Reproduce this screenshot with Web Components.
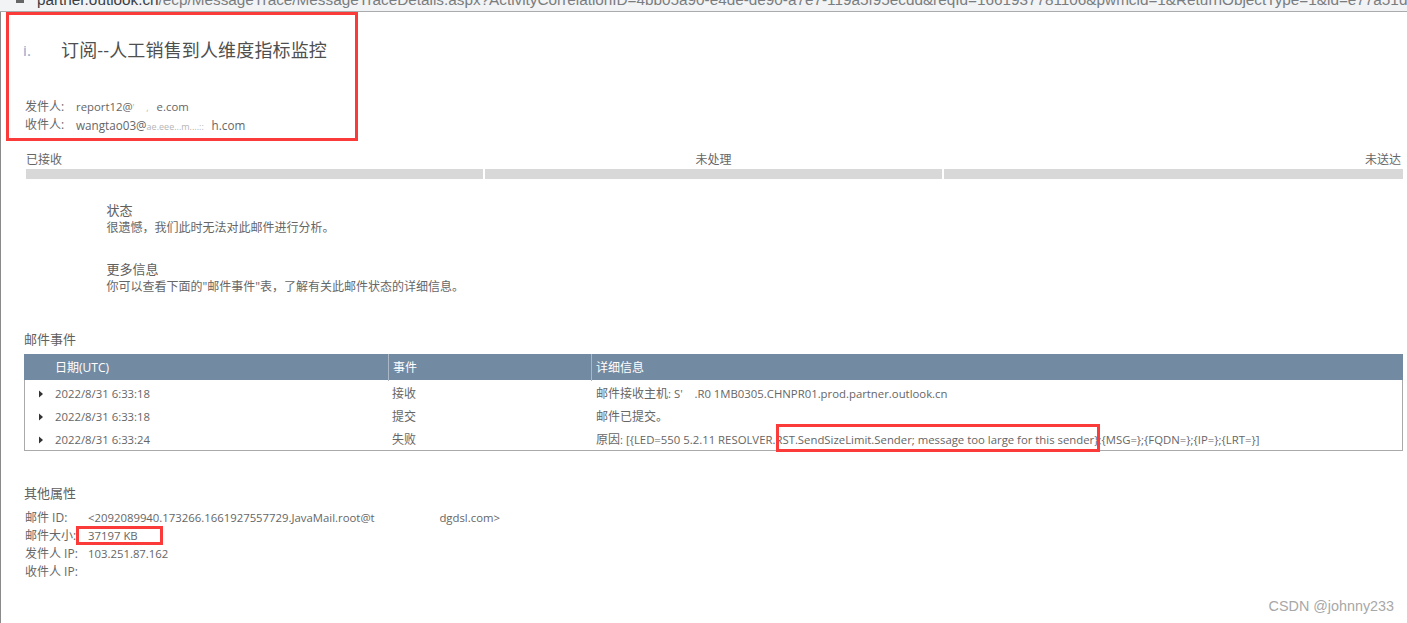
<!DOCTYPE html>
<html lang="zh">
<head>
<meta charset="utf-8">
<title>邮件跟踪详细信息</title>
<style>
html, body { margin: 0; padding: 0; background: #fff; }
body {
    width: 1407px;
    height: 623px;
    overflow: hidden;
    position: relative;
    font-family: "Open Sans", "Noto Sans CJK SC", sans-serif;
    font-size: 12px;
    color: #666;
}
.lat { font-size: 11.35px; }
.mail { font-size: 11.7px; }
.crumb { display: inline-block; font-size: 9px; color: #b5b5b5; white-space: nowrap; vertical-align: baseline; }
</style>
</head>
<body>
<url-bar domain="partner.outlook.cn">/ecp/MessageTrace/MessageTraceDetails.aspx?ActivityCorrelationID=4bb05a90-e4de-de90-a7e7-119a5f95ecdd&amp;reqId=1661937781106&amp;pwmcid=1&amp;ReturnObjectType=1&amp;id=e77a51de</url-bar>
<trace-page>
    <mail-head title-text="订阅--人工销售到人维度指标监控">
        <span slot="sender" class="lat">report12@<span class="crumb" style="width:24px">' &nbsp; &nbsp; ,</span>e.com</span>
        <span slot="recipient" class="mail">wangtao03@<span class="crumb" style="width:65px">ae.eee...m....::</span>h.com</span>
    </mail-head>
    <trace-progress></trace-progress>
    <trace-note heading="状态">很遗憾，我们此时无法对此邮件进行分析。</trace-note>
    <trace-note heading="更多信息">你可以查看下面的"邮件事件"表，了解有关此邮件状态的详细信息。</trace-note>
    <event-table>
        <event-row date="2022/8/31 6:33:18" kind="接收">邮件接收主机<span class="lat">: S'&nbsp;&nbsp;&nbsp;&nbsp;.R0 1MB0305.CHNPR01.prod.partner.outlook.cn</span></event-row>
        <event-row date="2022/8/31 6:33:18" kind="提交">邮件已提交。</event-row>
        <event-row date="2022/8/31 6:33:24" kind="失败">原因<span class="lat">: [{LED=550 5.2.11 RESOLVER.RST.SendSizeLimit.Sender; message too large for this sender};{MSG=};{FQDN=};{IP=};{LRT=}]</span></event-row>
    </event-table>
    <mail-props>
        <prop-line label="邮件 ID:"><span class="lat">&lt;2092089940.173266.1661927557729.JavaMail.root@t&nbsp;&nbsp;&nbsp;&nbsp;&nbsp;&nbsp;&nbsp;&nbsp;&nbsp;&nbsp;&nbsp;&nbsp;&nbsp;&nbsp;&nbsp;&nbsp;&nbsp;&nbsp;&nbsp;&nbsp;&nbsp;&nbsp;dgdsl.com&gt;</span></prop-line>
        <prop-line label="邮件大小:"><span class="lat">37197 KB</span></prop-line>
        <prop-line label="发件人 IP:"><span class="lat">103.251.87.162</span></prop-line>
        <prop-line label="收件人 IP:"></prop-line>
    </mail-props>
</trace-page>
<red-mark style="left:6px;top:12px;width:352px;height:129px"></red-mark>
<red-mark style="left:776px;top:424px;width:324px;height:28px"></red-mark>
<red-mark style="left:76px;top:526px;width:87px;height:19px"></red-mark>
<water-mark>CSDN @johnny233</water-mark>

<script>
class UrlBar extends HTMLElement {
    constructor() {
        super();
        this.attachShadow({mode: "open"}).innerHTML = `
        <style>
        :host {
            display: flex;
            height: 11px;
            background: #f1f3f4;
            border-bottom: 1px solid #a9abad;
            overflow: hidden;
            white-space: nowrap;
            font-family: "Liberation Sans", sans-serif;
            font-size: 15.3px;
            line-height: 14px;
            color: #7a7d80;
        }
        .lock { width: 8px; height: 3px; margin: 0 13px 0 16px; background: #666; flex: none; }
        .url { margin-top: -7px; }
        b { font-weight: 400; color: #3a3d44; }
        </style>
        <div class="lock"></div><div class="url"><b id="d"></b><slot></slot></div>`;
        this.shadowRoot.getElementById("d").textContent = this.getAttribute("domain");
    }
}

class TracePage extends HTMLElement {
    constructor() {
        super();
        this.attachShadow({mode: "open"}).innerHTML = `
        <style>
        :host {
            display: flex;
            flex-direction: column;
            height: 611px;
            box-sizing: border-box;
            border-left: 1px solid #8a8a8a;
            padding: 0 4px 0 23px;
        }
        </style>
        <slot></slot>`;
    }
}

class MailHead extends HTMLElement {
    constructor() {
        super();
        this.attachShadow({mode: "open"}).innerHTML = `
        <style>
        :host { display: block; height: 137px; margin-left: -1px; }
        h1 {
            margin: 0;
            padding-top: 25px;
            height: 61px;
            font-size: 18px;
            font-weight: 400;
            line-height: 26px;
            letter-spacing: .15px;
            color: #4f4f4f;
            display: flex;
        }
        .stub { color: #7fabd0; font-size: 15px; width: 38px; flex: none; }
        .line { display: flex; height: 18px; line-height: 18px; color: #666; padding-left: 2px; }
        .line b { font-weight: 400; width: 51px; flex: none; }
        ::slotted(span) { white-space: nowrap; }
        </style>
        <h1><span class="stub">i.</span><span id="title"></span></h1>
        <div class="line"><b>发件人:</b><slot name="sender"></slot></div>
        <div class="line"><b>收件人:</b><slot name="recipient"></slot></div>`;
        this.shadowRoot.getElementById("title").textContent = this.getAttribute("title-text");
    }
}

class TraceProgress extends HTMLElement {
    constructor() {
        super();
        this.attachShadow({mode: "open"}).innerHTML = `
        <style>
        :host {
            display: grid;
            grid-template-columns: 457px 457px 459px;
            grid-template-rows: 20px 10px;
            column-gap: 2px;
            margin: 0 0 0 2px;
            height: 32px;
        }
        span { line-height: 22px; grid-row: 1; }
        .mid { text-align: center; }
        .end { text-align: right; padding-right: 2px; }
        i { display: block; background: #d8d8d8; grid-row: 2; }
        </style>
        <span>已接收</span><span class="mid">未处理</span><span class="end">未送达</span>
        <i></i><i></i><i></i>`;
    }
}

class TraceNote extends HTMLElement {
    constructor() {
        super();
        this.attachShadow({mode: "open"}).innerHTML = `
        <style>
        :host { display: block; padding: 20px 0 0 82.5px; height: 59px; box-sizing: border-box; }
        h2 { margin: 0; font-size: 13px; font-weight: 400; line-height: 18px; color: #606060; }
        div { line-height: 17px; color: #666; }
        </style>
        <h2 id="h"></h2><div><slot></slot></div>`;
        this.shadowRoot.getElementById("h").textContent = this.getAttribute("heading");
    }
}

class EventTable extends HTMLElement {
    constructor() {
        super();
        this.attachShadow({mode: "open"}).innerHTML = `
        <style>
        :host { display: block; padding-top: 30px; }
        h2 { margin: 0 0 5px; font-size: 13px; font-weight: 400; line-height: 20px; color: #606060; }
        .head {
            display: grid;
            grid-template-columns: 365px 203px 1fr;
            height: 26px;
            background: #738aa3;
            color: #fff;
            line-height: 27px;
        }
        .head span { border-right: 1px solid #a9b7c6; padding-left: 4px; }
        .head span:first-child { padding-left: 31px; }
        .head span:last-child { border-right: 0; }
        .body {
            border: 1px solid #aaa;
            border-top: 0;
            padding: 2px 0 0;
            height: 68px;
        }
        </style>
        <h2>邮件事件</h2>
        <div class="head"><span>日期(UTC)</span><span>事件</span><span>详细信息</span></div>
        <div class="body"><slot></slot></div>`;
    }
}

class EventRow extends HTMLElement {
    constructor() {
        super();
        this.attachShadow({mode: "open"}).innerHTML = `
        <style>
        :host {
            display: grid;
            grid-template-columns: 363px 204px 1fr;
            height: 23px;
            line-height: 23px;
            white-space: nowrap;
        }
        .date { display: flex; align-items: center; font-size: 11.35px; }
        svg { margin: 0 11px 0 13px; flex: none; }
        .kind { padding-left: 4px; }
        .info { padding-left: 4px; }
        </style>
        <div class="date">
            <svg width="6" height="8" viewBox="0 0 6 8"><path d="M1 0.5 L5 4 L1 7.5 Z" fill="#333"/></svg>
            <span id="d"></span>
        </div>
        <div class="kind" id="k"></div>
        <div class="info"><slot></slot></div>`;
        this.shadowRoot.getElementById("d").textContent = this.getAttribute("date");
        this.shadowRoot.getElementById("k").textContent = this.getAttribute("kind");
    }
}

class MailProps extends HTMLElement {
    constructor() {
        super();
        this.attachShadow({mode: "open"}).innerHTML = `
        <style>
        :host { display: block; padding-top: 32px; }
        h2 { margin: 0 0 6px; font-size: 13px; font-weight: 400; line-height: 20px; color: #606060; }
        </style>
        <h2>其他属性</h2>
        <slot></slot>`;
    }
}

class PropLine extends HTMLElement {
    constructor() {
        super();
        this.attachShadow({mode: "open"}).innerHTML = `
        <style>
        :host { display: flex; height: 18px; line-height: 18px; padding-left: 1px; white-space: nowrap; }
        b { font-weight: 400; width: 63px; flex: none; }
        </style>
        <b id="l"></b><slot></slot>`;
        this.shadowRoot.getElementById("l").textContent = this.getAttribute("label");
    }
}

class RedMark extends HTMLElement {
    constructor() {
        super();
        this.attachShadow({mode: "open"}).innerHTML = `
        <style>
        :host {
            display: block;
            position: absolute;
            box-sizing: border-box;
            border: 3px solid #fb3a3a;
            pointer-events: none;
        }
        </style>`;
    }
}

class WaterMark extends HTMLElement {
    constructor() {
        super();
        this.attachShadow({mode: "open"}).innerHTML = `
        <style>
        :host {
            display: block;
            position: absolute;
            right: 13px;
            top: 597px;
            font-family: "Liberation Sans", sans-serif;
            font-size: 14.35px;
            line-height: 18px;
            color: #a8a8a8;
        }
        </style>
        <slot></slot>`;
    }
}

customElements.define("url-bar", UrlBar);
customElements.define("trace-page", TracePage);
customElements.define("mail-head", MailHead);
customElements.define("trace-progress", TraceProgress);
customElements.define("trace-note", TraceNote);
customElements.define("event-table", EventTable);
customElements.define("event-row", EventRow);
customElements.define("mail-props", MailProps);
customElements.define("prop-line", PropLine);
customElements.define("red-mark", RedMark);
customElements.define("water-mark", WaterMark);
</script>
</body>
</html>
